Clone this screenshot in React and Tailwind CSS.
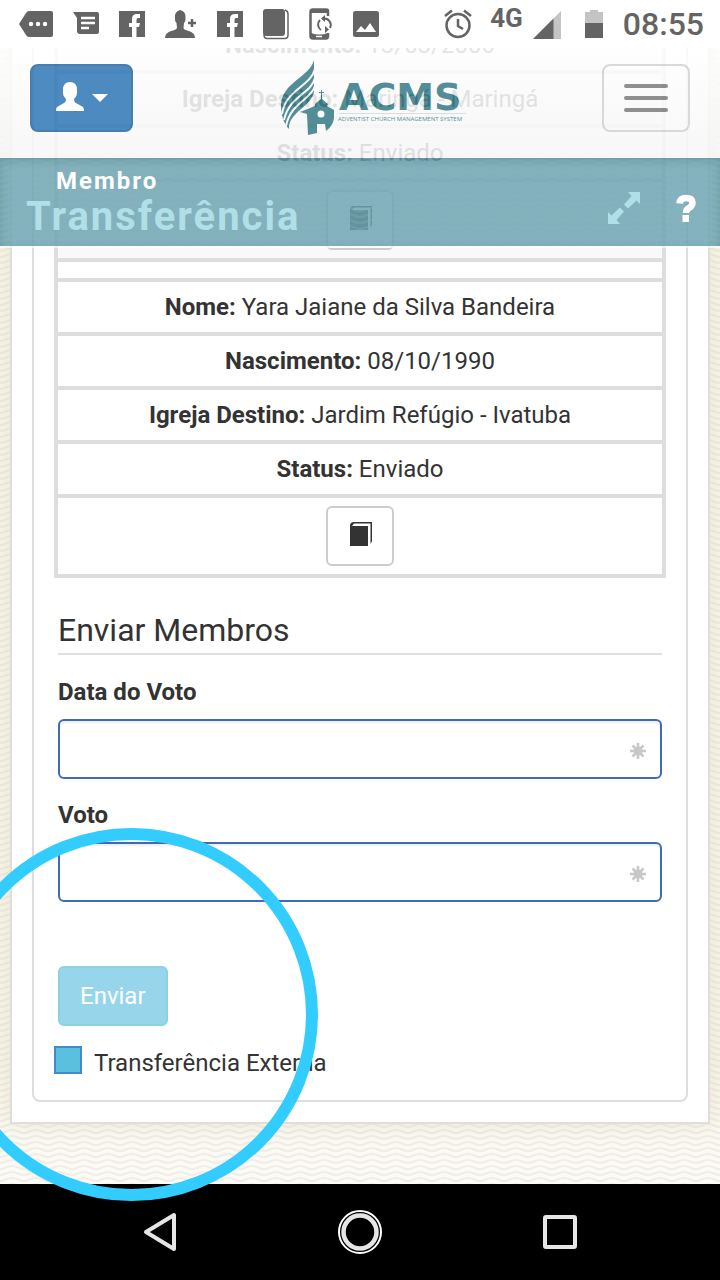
import React, { useState } from 'react';

const members = [
  {
    birth: '13/03/2000',
    church: 'Maringá - Maringá',
    status: 'Enviado',
  },
  {
    name: 'Yara Jaiane da Silva Bandeira',
    birth: '08/10/1990',
    church: 'Jardim Refúgio - Ivatuba',
    status: 'Enviado',
  },
];

// Wavy paper texture, used behind the page and on the title bar
const Waves = ({ id, color }) => (
  <svg className="absolute inset-0 w-full h-full" aria-hidden="true">
    <defs>
      <pattern id={id} width="24" height="6" patternUnits="userSpaceOnUse">
        <g fill="none" stroke={color} strokeWidth="2">
          <path d="M0 -1 C5 -1 7 -4 12 -4 S19 -1 24 -1" />
          <path d="M0 5 C5 5 7 2 12 2 S19 5 24 5" />
          <path d="M0 11 C5 11 7 8 12 8 S19 11 24 11" />
        </g>
      </pattern>
    </defs>
    <rect width="100%" height="100%" fill={`url(#${id})`} />
  </svg>
);

const BookIcon = () => (
  <svg viewBox="0 0 24 26" className="w-6 h-[26px]" aria-hidden="true">
    <path d="M2 5 H20 V25 H2 Z" fill="#333" />
    <path d="M2 5 Q2 1 6 1 H24 V20 L22.500 23 V2.500 H6 L4 5 Z" fill="#333" />
  </svg>
);

const FacebookIcon = () => (
  <svg viewBox="0 0 26 26" className="size-[26px]" aria-hidden="true">
    <path
      fill="#646464"
      fillRule="evenodd"
      d="M0 0 H26 V26 H0 Z M13 26 H17.500 V16 H20 L21 12 H17.500 V9 Q17.500 7 19 7 H21 V3 H18 Q13 3 13 8 V12 H10 V16 H13 Z"
    />
  </svg>
);

const StatusBar = () => (
  <div className="h-12 bg-white flex items-center justify-between pl-[19px] pr-4 text-[#646464]">
    <div className="flex items-center gap-5">
      <svg viewBox="0 0 34 26" className="w-[34px] h-[26px]" aria-hidden="true">
        <path d="M0 13 L7 2 Q8 0 10 0 H32 Q34 0 34 2 V24 Q34 26 32 26 H10 Q8 26 7 24 Z" fill="#646464" />
        <g fill="#fff">
          <circle cx="12" cy="13" r="2.200" />
          <circle cx="19" cy="13" r="2.200" />
          <circle cx="26" cy="13" r="2.200" />
        </g>
      </svg>
      <svg viewBox="2 0 26 24" className="w-[26px] h-6" aria-hidden="true">
        <path d="M2 0 H26 Q28 0 28 2 V20 Q28 22 26 22 H9 Q6 22 6 19 V6 Z" fill="#646464" />
        <path d="M10 6 H24 M10 11 H24 M10 16 H18" stroke="#fff" strokeWidth="2.500" />
      </svg>
      <FacebookIcon />
      <svg viewBox="0 0 32 28" className="w-8 h-7" aria-hidden="true">
        <path
          fill="#646464"
          d="M10 8 Q9 2 15 0 Q21 1 20.500 8 Q21 11 19 13 L18.500 18 Q19 20 24 21 Q30 23 30 28 H0 Q0 23 6 21 Q11 20 12 18 L11.500 13 Q9.500 11 10 8 Z"
        />
        <path d="M23 13 H31 M27 9 V17" stroke="#646464" strokeWidth="2.500" />
      </svg>
      <FacebookIcon />
      <svg viewBox="0 0 26 32" className="w-[26px] h-8" aria-hidden="true">
        <rect x="0" y="1" width="22" height="27" rx="3" fill="#646464" />
        <path d="M22 2 Q25 3 25 6 V27 Q25 30.500 22 30.500 H4 Q1 30.500 1 27" fill="none" stroke="#646464" strokeWidth="1.500" />
      </svg>
      <svg viewBox="0 0 24 32" className="w-6 h-8" aria-hidden="true">
        <path
          d="M19 8 V3 Q19 1.500 17 1.500 H4 Q1.500 1.500 1.500 4 V28 Q1.500 30.500 4 30.500 H17 Q19 30.500 19 28 V25"
          fill="none"
          stroke="#646464"
          strokeWidth="2.500"
        />
        <path d="M2 25 Q10 28 19 25 V30 H2 Z M2 1 H19 V5 H2 Z" fill="#646464" />
        <path d="M12 22 A6.500 6.500 0 0 1 11 12 M13 10.500 H15 A6.500 6.500 0 0 1 21 20" fill="none" stroke="#646464" strokeWidth="2" />
        <path d="M16 7 V14 L12 10.500 Z M16 18 V25 L20 21.500 Z" fill="#646464" />
        <path d="M7 28.500 H13" stroke="#fff" strokeWidth="1.500" />
      </svg>
      <svg viewBox="0 0 26 26" className="size-[26px]" aria-hidden="true">
        <rect width="26" height="26" rx="2.500" fill="#646464" />
        <path d="M3 21 L8 15 L12 19 L17 12 L23 21 Z" fill="#fff" />
      </svg>
    </div>
    <div className="flex items-center">
      <svg viewBox="0 0 28 30" className="w-7 h-[30px]" aria-hidden="true">
        <g fill="none" stroke="#646464" strokeWidth="2.500">
          <circle cx="14" cy="16.500" r="11.500" />
          <path d="M14 10 V17 L19 20 M1 7 L8 1.500 M27 7 L20 1.500" />
        </g>
      </svg>
      <span className="ml-[18px] mb-3 text-[26px] leading-6 font-bold">4G</span>
      <svg viewBox="0 0 28 28" className="ml-2.5 mt-0.5 size-7" aria-hidden="true">
        <path d="M28 0 V28 H0 Z" fill="#c4c4c4" />
        <path d="M20.500 7.500 V28 H0 Z" fill="#646464" />
      </svg>
      <svg viewBox="0 0 18 28" className="ml-6 w-[18px] h-7" aria-hidden="true">
        <path d="M0 2 H5 V0 H13 V2 H18 V28 H0 Z" fill="#c4c4c4" />
        <path d="M0 13 H18 V28 H0 Z" fill="#646464" />
      </svg>
      <span className="ml-5 text-[32px] leading-8 font-medium">08:55</span>
    </div>
  </div>
);

const Logo = () => (
  <svg viewBox="0 0 188 76" className="w-[188px] h-[76px]" role="img" aria-label="ACMS">
    <path
      fill="#3b7f8a"
      d="M34 0 C30 17 2 22 1 45 C1 56 4 64 9 69 C8 52 33 46 34 31 Z"
    />
    <g fill="none" stroke="#fafafa" strokeWidth="2">
      <path d="M35 9 C30 27 6 29 2 54" />
      <path d="M35 18 C31 34 9 36 4 60" />
      <path d="M35 26 C31 40 11 42 6 66" />
    </g>
    <path
      fill="#3b7f8a"
      d="M41 30 H42 V32 H44 V33 H42 V39 L48 44 L47 46 L54 50 V58 Q53 66 46 71 L45 64 H37 V73 L28 75 L27 54 L20 52 L35 46 L35 44 L41 39 V33 H39 V32 H41 Z"
    />
    <circle cx="41" cy="54" r="3.500" fill="#fff" />
    <text
      x="59"
      y="50"
      fontFamily="'DejaVu Sans', sans-serif"
      fontSize="38"
      fontWeight="700"
      fill="#3b7f8a"
    >
      ACMS
    </text>
    <path d="M59 53.500 H186" stroke="#d5dcdd" />
    <text x="58" y="61" fontFamily="'Open Sans', sans-serif" fontSize="6" fill="#3b7f8a">
      ADVENTIST CHURCH MANAGEMENT SYSTEM
    </text>
  </svg>
);

const Navbar = () => (
  <div className="opacity-[0.87] h-[110px] bg-linear-to-b from-white to-[#f7f7f7] flex items-start justify-between px-[30px] pt-4">
    <button
      type="button"
      aria-label="Perfil"
      className="w-[103px] h-[68px] rounded-lg bg-[#337ab7] border-2 border-[#2e6da4] flex items-center justify-center gap-2"
    >
      <svg viewBox="0 0 28 29" className="w-7 h-[29px] -mt-1" aria-hidden="true">
        <path
          fill="#fff"
          d="M7 8 Q7 0 14 0 Q21 0 21 8 Q22 13 18 17 Q18 20 20 21 L27 25 Q28 26 28 29 H0 Q0 26 1 25 L8 21 Q10 20 10 17 Q6 13 7 8 Z"
        />
      </svg>
      <svg viewBox="0 0 16 8" className="w-4 h-2" aria-hidden="true">
        <path d="M0 0 H16 L8 8 Z" fill="#fff" />
      </svg>
    </button>
    <div className="-mt-1 ml-3">
      <Logo />
    </div>
    <button
      type="button"
      aria-label="Menu"
      className="w-[88px] h-[68px] rounded-lg border-2 border-[#d4d4d4] flex flex-col items-center justify-center gap-2"
    >
      <span className="w-11 h-1 rounded-full bg-[#808080]" />
      <span className="w-11 h-1 rounded-full bg-[#808080]" />
      <span className="w-11 h-1 rounded-full bg-[#808080]" />
    </button>
  </div>
);

const TitleBar = () => (
  <div className="relative h-[90px] border-b-2 border-white/60">
    <div className="absolute inset-0 bg-[#70a3b3]/85 shadow-[inset_0_3px_8px_rgba(0,60,70,0.2)]">
      <Waves id="waves-title" color="rgba(125,185,185,0.3)" />
    </div>
    <div className="relative h-full flex items-center justify-between pl-[26px] pr-6">
      <div className="pb-0.5 font-bold">
        <p className="pl-[30px] text-2xl leading-8 tracking-[2px] text-white">Membro</p>
        <h1 className="text-[40px] leading-10 tracking-[2px] text-[#b0dfe8]">Transferência</h1>
      </div>
      <div className="flex items-center gap-9 pt-3">
        <button type="button" aria-label="Expandir">
          <svg viewBox="0 0 32 32" className="size-8" aria-hidden="true">
            <path d="M20 0 H32 V12 L28.500 8.500 L20 16.500 L16 12.500 L23.500 4 Z" fill="#b0dfe8" />
            <path d="M12 32 H0 V20 L3.500 23.500 L12 15.500 L16 19.500 L8.500 28 Z" fill="#b0dfe8" />
          </svg>
        </button>
        <button type="button" aria-label="Ajuda">
          <svg viewBox="0 0 20 28" className="w-5 h-7" aria-hidden="true">
            <path d="M3.500 9.500 Q4 4 10 4 Q16.500 4 16.500 9 Q16.500 12 13 14 Q10 15.500 10 19" fill="none" stroke="#fff" strokeWidth="6.500" />
            <path d="M6.500 21 H13 V28 H6.500 Z" fill="#fff" />
          </svg>
        </button>
      </div>
    </div>
  </div>
);

const Cell = ({ striped, children }) => (
  <tr className={striped ? 'bg-[#f9f9f9]' : 'bg-white'}>
    <td className="border-4 border-[#ddd] p-2 text-center">{children}</td>
  </tr>
);

const MemberRows = ({ member, striped }) => (
  <>
    {member.name && (
      <Cell striped={striped}>
        <b>Nome:</b> {member.name}
      </Cell>
    )}
    <Cell striped={striped}>
      <b>Nascimento:</b> {member.birth}
    </Cell>
    <Cell striped={striped}>
      <b>Igreja Destino:</b> {member.church}
    </Cell>
    <Cell striped={striped}>
      <b>Status:</b> {member.status}
    </Cell>
    <Cell striped={striped}>
      <button
        type="button"
        aria-label="Detalhes"
        className="mx-auto flex w-[68px] h-[60px] items-center justify-center rounded-md border-2 border-[#ccc] bg-white pb-1"
      >
        <BookIcon />
      </button>
    </Cell>
  </>
);

const RequiredField = ({ id, label, value, onChange }) => (
  <div>
    <label htmlFor={id} className="block font-bold mb-2.5">
      {label}
    </label>
    <div className="relative">
      <input
        id={id}
        type="text"
        value={value}
        onChange={(e) => onChange(e.target.value)}
        className="block w-full h-[60px] rounded-md border-2 border-[#4169b4] bg-white pl-6 pr-12 shadow-[inset_0_2px_2px_rgba(0,0,0,0.07)]"
      />
      <svg viewBox="0 0 16 16" className="absolute right-4 top-6 size-4" aria-hidden="true">
        <g stroke="#c8c8c8" strokeWidth="2.500">
          <path d="M8 0 V16 M0 8 H16 M2.500 2.500 L13.500 13.500 M13.500 2.500 L2.500 13.500" />
        </g>
        <circle cx="8" cy="8" r="4.500" fill="#c8c8c8" />
      </svg>
    </div>
  </div>
);

const SendForm = () => {
  const [voteDate, setVoteDate] = useState('');
  const [vote, setVote] = useState('');
  const [external, setExternal] = useState(true);

  return (
    <form className="px-1 pt-[30px]" onSubmit={(e) => e.preventDefault()}>
      <h2 className="border-b-2 border-[#e0e0e0] text-[32px] leading-[45px]">Enviar Membros</h2>
      <div className="mt-5 flex flex-col gap-[19px]">
        <RequiredField id="vote-date" label="Data do Voto" value={voteDate} onChange={setVoteDate} />
        <RequiredField id="vote" label="Voto" value={vote} onChange={setVote} />
      </div>
      <button
        type="submit"
        disabled
        className="mt-16 h-[60px] px-5 rounded-md border-2 border-[#8bd0e3] bg-[#97d6ea] text-white"
      >
        Enviar
      </button>
      <div className="mt-5 -ml-1 flex items-start gap-3">
        <input
          id="external"
          type="checkbox"
          checked={external}
          onChange={(e) => setExternal(e.target.checked)}
          className="appearance-none size-7 border-2 border-[#428bca] checked:bg-[#5bc0de]"
        />
        <label htmlFor="external">Transferência Externa</label>
      </div>
    </form>
  );
};

const SystemNav = () => (
  <nav className="h-24 bg-black grid grid-cols-3 items-center justify-items-center px-[60px]">
    <button type="button" aria-label="Voltar">
      <svg viewBox="0 0 34 40" className="w-[34px] h-10" aria-hidden="true">
        <path d="M31 3 V37 L3 20 Z" fill="none" stroke="#e6e6e6" strokeWidth="4" strokeLinejoin="round" />
      </svg>
    </button>
    <button type="button" aria-label="Início">
      <svg viewBox="0 0 44 44" className="size-11" aria-hidden="true">
        <circle cx="22" cy="22" r="21" fill="none" stroke="#fff" strokeWidth="2" />
        <circle cx="22" cy="22" r="16.500" fill="none" stroke="#e6e6e6" strokeWidth="4.500" />
      </svg>
    </button>
    <button type="button" aria-label="Recentes">
      <svg viewBox="0 0 34 34" className="size-[34px]" aria-hidden="true">
        <rect x="2" y="2" width="30" height="30" rx="1" fill="none" stroke="#e6e6e6" strokeWidth="4" />
      </svg>
    </button>
  </nav>
);

const App = () => {
  return (
    <div className="relative min-h-screen flex flex-col overflow-hidden font-[Roboto,sans-serif] text-2xl leading-[34px] text-[#333]">
      <main className="relative flex-1 bg-linear-to-b from-[#f8f5e9] from-90% to-[#fcfbf7] px-2.5 pb-[60px]">
        <Waves id="waves-page" color="rgba(205,200,185,0.25)" />
        <div className="relative bg-white border-2 border-t-0 border-[#e0deda] px-5 pb-5 shadow-[0_0_20px_rgba(180,170,130,0.2)]">
          <section className="rounded-b-lg border-2 border-t-0 border-[#ddd] px-5 pt-4 pb-5">
            <table className="w-full border-collapse">
              <tbody>
                <MemberRows member={members[0]} striped />
                <Cell />
                <MemberRows member={members[1]} />
              </tbody>
            </table>
            <SendForm />
          </section>
        </div>
      </main>
      <SystemNav />
      <header className="absolute inset-x-0 top-0">
        <StatusBar />
        <Navbar />
        <TitleBar />
      </header>
      {/* highlight ring around the send button */}
      <div className="absolute -left-[55px] top-[828px] size-[373px] rounded-full border-12 border-[#33ccff] pointer-events-none" />
    </div>
  );
};

export default App;
